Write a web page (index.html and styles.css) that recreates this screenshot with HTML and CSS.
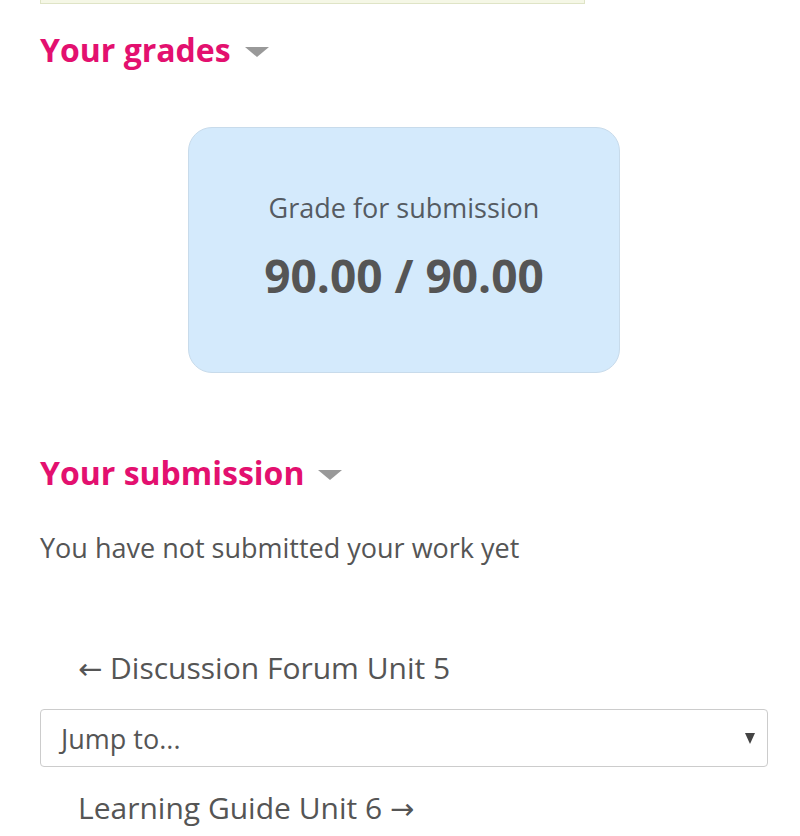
FILE: index.html
```html
<!DOCTYPE html>
<html lang="en">
<head>
    <meta charset="UTF-8">
    <meta name="viewport" content="width=device-width, initial-scale=1.0">
    <title>Assignment</title>
    <link rel="stylesheet" href="styles.css">
</head>
<body>

    <div class="notice"></div>

    <h2 class="section-title">Your grades <span class="caret"></span></h2>

    <div class="grade-card">
        <div class="grade-label">Grade for submission</div>
        <div class="grade-value">90.00 / 90.00</div>
    </div>

    <h2 class="section-title submission-title">Your submission <span class="caret"></span></h2>
    <p class="status">You have not submitted your work yet</p>

    <div class="activity-nav">
        <a class="nav-link" href="#"><span class="arrow">&larr;</span> Discussion Forum Unit 5</a>
        <div class="jump">
            <span>Jump to...</span>
            <span class="jump-arrow"></span>
        </div>
        <a class="nav-link" href="#">Learning Guide Unit 6 <span class="arrow">&rarr;</span></a>
    </div>

</body>
</html>
```

FILE: styles.css
```css
body {
    font-family: "Open Sans", sans-serif;
    color: #555;
    margin: 0;
    padding: 0 32px 0 40px;
    background: #fff;
}
.notice {
    width: 543px;
    height: 3px;
    background-color: #f5f7e6;
    border: 1px solid #dfe4c6;
    border-top: none;
}
.section-title {
    color: #e3106f;
    font-size: 32px;
    font-weight: 700;
    margin: 24px 0 0;
    line-height: 44px;
    display: flex;
    align-items: center;
}
.caret {
    display: inline-block;
    width: 0;
    height: 0;
    margin-left: 14px;
    margin-top: 4px;
    border-left: 12px solid transparent;
    border-right: 12px solid transparent;
    border-top: 10px solid #999;
}
.grade-card {
    width: 432px;
    height: 246px;
    margin: 55px 0 0 148px;
    background-color: #d4eafc;
    border: 1px solid #c8dbeb;
    border-radius: 24px;
    box-sizing: border-box;
    text-align: center;
    padding-top: 61px;
}
.grade-label {
    font-size: 27px;
    line-height: 38px;
    color: #555b62;
}
.grade-value {
    font-size: 46px;
    font-weight: 700;
    line-height: 60px;
    margin-top: 18px;
}
.submission-title {
    margin-top: 78px;
}
.status {
    font-size: 27px;
    margin: 34px 0 0;
}
.activity-nav {
    margin-top: 82px;
}
.nav-link {
    display: block;
    color: #555;
    text-decoration: none;
    font-size: 30px;
    line-height: 40px;
    margin-left: 38px;
}
.arrow {
    font-family: "DejaVu Sans", sans-serif;
    font-size: 29px;
}
.jump {
    display: flex;
    justify-content: space-between;
    align-items: center;
    height: 58px;
    box-sizing: border-box;
    border: 1px solid #ccc;
    border-radius: 4px;
    padding: 0 12px 0 20px;
    margin: 20px 0 21px;
    font-size: 27px;
}
.jump-arrow {
    width: 0;
    height: 0;
    border-left: 5px solid transparent;
    border-right: 5px solid transparent;
    border-top: 11px solid #444;
}
```
